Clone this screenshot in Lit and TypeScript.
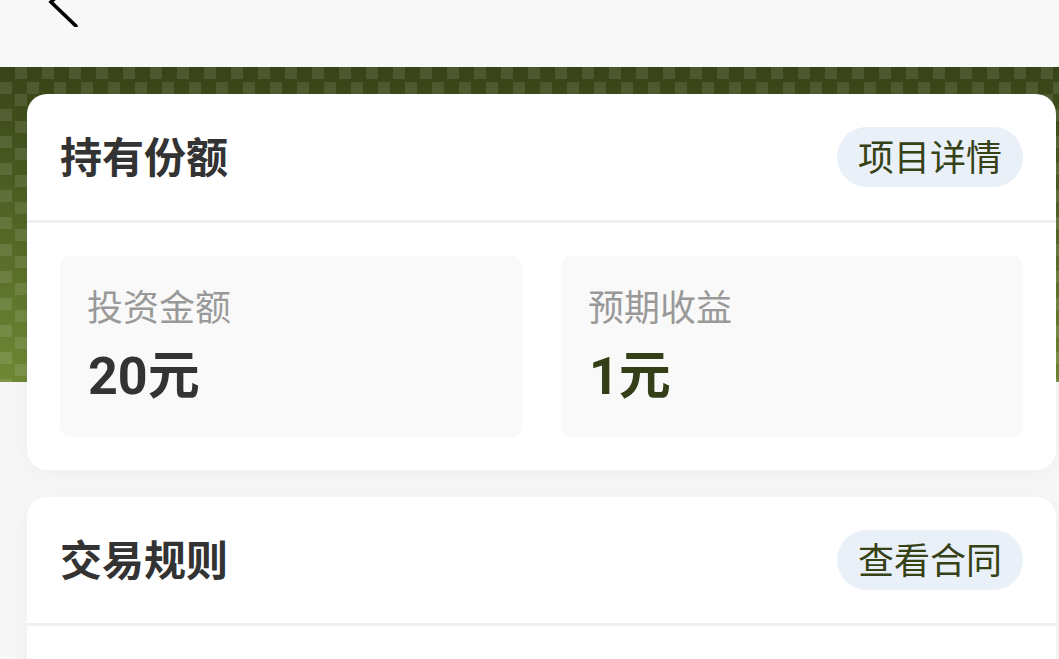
import { LitElement, html, css } from "lit";
import { customElement } from "lit/decorators.js";

@customElement("app-root")
export class AppRoot extends LitElement {
  static styles = css`
    :host {
      display: block;
      width: 1059px;
      height: 659px;
      overflow: hidden;
      background: #f7f7f7;
      font-family: "Noto Sans CJK SC", "Noto Sans", sans-serif;
    }
    .nav {
      height: 67px;
      background: #f8f8f8;
      overflow: hidden;
    }
    .back {
      display: block;
      width: 40px;
      height: 40px;
      margin: -13px 0 0 44px;
    }
    .hero {
      height: 315px;
      background-image:
        conic-gradient(at 15px 12px, rgba(255, 255, 255, 0.1) 0 25%, transparent 0),
        conic-gradient(at 12px 15px, transparent 0 50%, rgba(255, 255, 255, 0.1) 0 75%, transparent 0),
        linear-gradient(180deg, #384317 0%, #6e8935 100%);
      background-size: 27px 27px, 27px 27px, 100% 100%;
    }
    .content {
      margin-top: -288px;
      padding: 0 3px 0 27px;
      display: flex;
      flex-direction: column;
      gap: 27px;
    }
    .card {
      background: #fff;
      border-radius: 20px;
      box-shadow: 0 4px 24px rgba(0, 0, 0, 0.04);
    }
    .head {
      height: 129px;
      box-sizing: border-box;
      padding: 0 33px 0 33px;
      display: flex;
      align-items: center;
      justify-content: space-between;
      border-bottom: 3px solid #f0f0f0;
    }
    .title {
      font-size: 42px;
      font-weight: 700;
      color: #333;
      line-height: 1;
      margin-bottom: 5px;
    }
    .tag {
      width: 186px;
      height: 60px;
      box-sizing: border-box;
      padding-bottom: 4px;
      border-radius: 30px;
      background: #e9f0f8;
      color: #364116;
      font-size: 36px;
      line-height: 56px;
      text-align: center;
    }
    .stats {
      display: grid;
      grid-template-columns: 462px 462px;
      gap: 39px;
      padding: 33px 33px;
    }
    .stat {
      height: 181px;
      box-sizing: border-box;
      border-radius: 10px;
      background: #f9f9f9;
      padding: 24px 27px 0 28px;
    }
    .label {
      font-size: 36px;
      line-height: 50px;
      color: #999;
      margin-left: -1px;
    }
    .value {
      margin-top: 12px;
      font-size: 52px;
      line-height: 70px;
      font-weight: 700;
      color: #333;
      font-family: "Roboto", "Noto Sans CJK SC", sans-serif;
    }
    .value.accent {
      color: #343f17;
    }
  `;

  render() {
    return html`
      <div class="nav">
        <svg class="back" viewBox="0 0 40 40" fill="none" stroke="#000" stroke-width="3.6" stroke-linecap="round">
          <path d="M32 39 L7 15 L32 -9" />
        </svg>
      </div>
      <div class="hero"></div>
      <div class="content">
        <section class="card">
          <div class="head">
            <div class="title">持有份额</div>
            <div class="tag">项目详情</div>
          </div>
          <div class="stats">
            <div class="stat">
              <div class="label">投资金额</div>
              <div class="value">20元</div>
            </div>
            <div class="stat">
              <div class="label">预期收益</div>
              <div class="value accent">1元</div>
            </div>
          </div>
        </section>
        <section class="card">
          <div class="head">
            <div class="title">交易规则</div>
            <div class="tag">查看合同</div>
          </div>
          <div class="stats"></div>
        </section>
      </div>
    `;
  }
}
